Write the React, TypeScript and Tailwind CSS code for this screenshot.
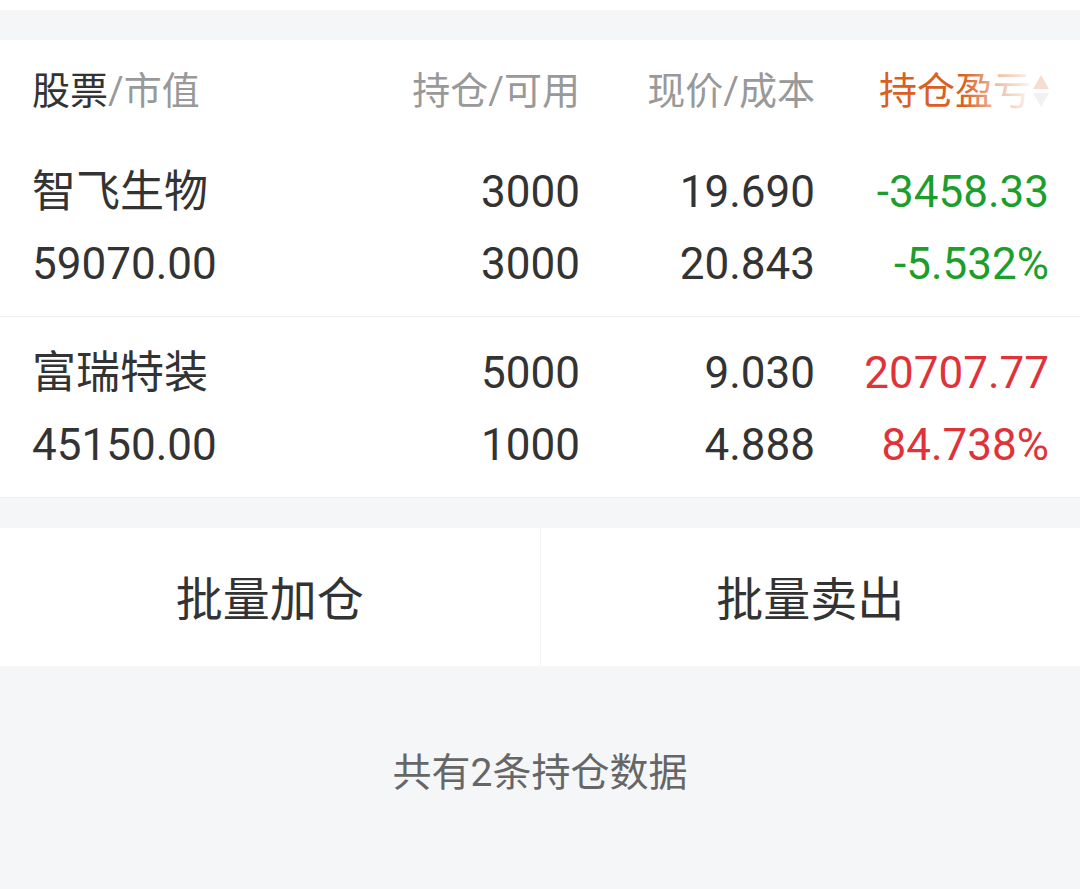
import React from "react";

type Holding = {
  name: string;
  value: string;
  qty: string;
  avail: string;
  price: string;
  cost: string;
  pnl: string;
  pct: string;
  up: boolean;
};

const HOLDINGS: Holding[] = [
  {
    name: "智飞生物",
    value: "59070.00",
    qty: "3000",
    avail: "3000",
    price: "19.690",
    cost: "20.843",
    pnl: "-3458.33",
    pct: "-5.532%",
    up: false,
  },
  {
    name: "富瑞特装",
    value: "45150.00",
    qty: "5000",
    avail: "1000",
    price: "9.030",
    cost: "4.888",
    pnl: "20707.77",
    pct: "84.738%",
    up: true,
  },
];

function HeaderRow() {
  return (
    <div className="flex h-[96px] items-start pl-[32px] pr-[31px] pt-[33px] text-[38px] leading-[36px] text-[#999999]">
      <div className="flex-1 whitespace-nowrap">
        <span className="text-[#333333]">股票</span>/市值
      </div>
      <div className="w-[200px] whitespace-nowrap text-right">持仓/可用</div>
      <div className="w-[235px] whitespace-nowrap text-right">现价/成本</div>
      <div className="relative flex h-[36px] w-[234px] items-center justify-end whitespace-nowrap">
        <span className="text-[#d9601f]">持仓盈亏</span>
        <span className="ml-[2px] flex w-[16px] shrink-0 flex-col items-center gap-[4px]">
          <svg width="16" height="14" viewBox="0 0 16 14">
            <path d="M8 0 L16 14 L0 14 Z" fill="#f7ddd0" />
          </svg>
          <svg width="16" height="14" viewBox="0 0 16 14">
            <path d="M0 0 L16 0 L8 14 Z" fill="#f1f1f1" />
          </svg>
        </span>
        {/* fade over the end of the sort label */}
        <div className="pointer-events-none absolute right-[16px] top-0 h-full w-[70px] bg-gradient-to-r from-white/0 via-white/60 to-white/95" />
      </div>
    </div>
  );
}

function HoldingRow({ h }: { h: Holding }) {
  const color = h.up ? "text-[#df3339]" : "text-[#1b9e2c]";
  return (
    <div className="flex border-b border-[#eeeeee] pl-[32px] pr-[31px] pt-[20px] pb-[16px] text-[44px] leading-[72px] text-[#333333]">
      <div className="flex flex-1 flex-col whitespace-nowrap">
        <span>{h.name}</span>
        <span>{h.value}</span>
      </div>
      <div className="flex w-[200px] flex-col text-right">
        <span>{h.qty}</span>
        <span>{h.avail}</span>
      </div>
      <div className="flex w-[235px] flex-col text-right">
        <span>{h.price}</span>
        <span>{h.cost}</span>
      </div>
      <div className={`flex w-[234px] flex-col text-right ${color}`}>
        <span>{h.pnl}</span>
        <span>{h.pct}</span>
      </div>
    </div>
  );
}

export default function App() {
  return (
    <div className="min-h-[889px] bg-[#f5f6f8] font-['Roboto','Noto_Sans_CJK_SC',sans-serif]">
      <div className="h-[10px] bg-white" />
      <div className="h-[30px]" />

      <div className="bg-white">
        <HeaderRow />
        {HOLDINGS.map((h) => (
          <HoldingRow key={h.name} h={h} />
        ))}
      </div>

      <div className="h-[30px]" />

      <div className="flex h-[138px] bg-white text-[47px] text-[#333333]">
        <button className="flex flex-1 items-center justify-center pt-[6px]">
          批量加仓
        </button>
        <div className="w-px bg-[#f2f2f2]" />
        <button className="flex flex-1 items-center justify-center pt-[6px]">
          批量卖出
        </button>
      </div>

      <div className="pt-[84px] text-center text-[39px] leading-[46px] text-[#666666]">
        共有2条持仓数据
      </div>
    </div>
  );
}
